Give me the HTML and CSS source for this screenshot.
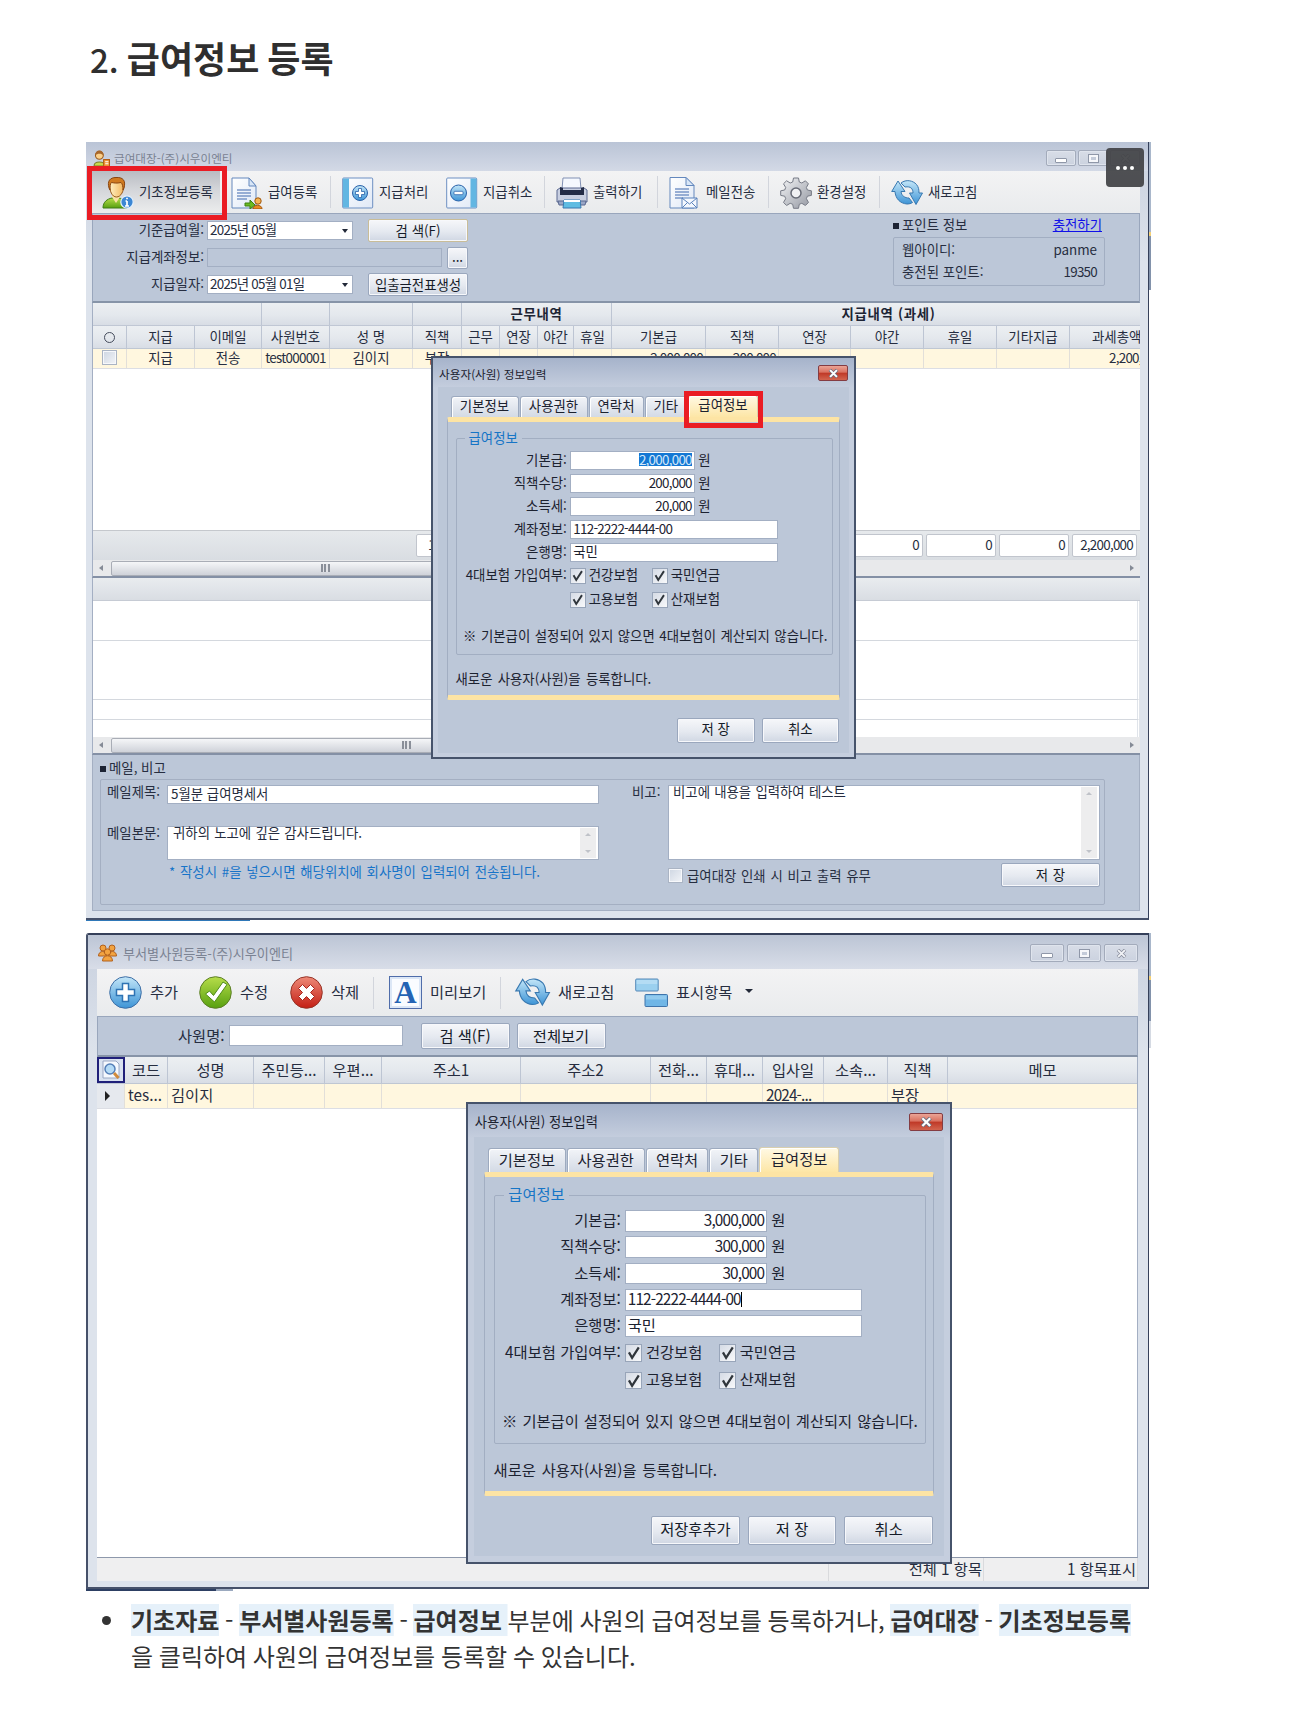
FILE: index.html
```html
<!DOCTYPE html>
<html lang="ko">
<head>
<meta charset="utf-8">
<title>급여정보 등록</title>
<link rel="stylesheet" href="styles.css">
</head>
<body>
<svg class="defs" width="0" height="0" aria-hidden="true">
  <defs>
    <linearGradient id="gBlue" x1="0" y1="0" x2="0" y2="1"><stop offset="0" stop-color="#c3e6f8"/><stop offset="1" stop-color="#3d94d6"/></linearGradient>
    <linearGradient id="gGreen" x1="0" y1="0" x2="0" y2="1"><stop offset="0" stop-color="#b7dd4a"/><stop offset="1" stop-color="#57a010"/></linearGradient>
    <linearGradient id="gRed" x1="0" y1="0" x2="0" y2="1"><stop offset="0" stop-color="#ee8a78"/><stop offset="1" stop-color="#c31e14"/></linearGradient>
    <linearGradient id="gGrey" x1="0" y1="0" x2="1" y2="1"><stop offset="0" stop-color="#f3f4f6"/><stop offset="1" stop-color="#9296a0"/></linearGradient>
    <linearGradient id="gFace" x1="0" y1="0" x2="1" y2="0"><stop offset="0" stop-color="#fff0c4"/><stop offset="1" stop-color="#f3b65c"/></linearGradient>
    <linearGradient id="gPaper" x1="0" y1="0" x2="1" y2="1"><stop offset="0" stop-color="#ffffff"/><stop offset="1" stop-color="#dfe8f6"/></linearGradient>
    <symbol id="person" viewBox="0 0 32 32">
      <path d="M1 31c0-6 4-9 9-10h7c5 1 7 4 8 10z" fill="url(#gGreen)" stroke="#3f7d14"/>
      <path d="M10 20l4 6 4-6v-3h-8z" fill="#fbe2a4"/>
      <path d="M7.500 7c0-4 3-6 7-6s7.500 2 7.500 6c0 7-3 13-7.500 13S7.500 14 7.500 7z" fill="url(#gFace)" stroke="#96561a"/>
      <path d="M7 11C5 4 8 .500 14 .500c7-.500 10 3 8 10.500l-1 2c0-4-.500-6-2-7.500-4 1-7 .500-9.500 0C8 7 8 9 8 13z" fill="#d07a20" stroke="#8a4510"/>
      <circle cx="25" cy="25" r="6.200" fill="#3c87d4" stroke="#e5f1fc" stroke-width="1.200"/>
      <path d="M25 24v5M23.500 24h1.500M23 29h4M25 20.800v1.500" stroke="#fff" stroke-width="1.700"/>
    </symbol>
    <symbol id="paysheet" viewBox="0 0 32 32">
      <path d="M1 1h17l7 8v22H1z" fill="url(#gPaper)" stroke="#6488bd"/><path d="M18 1v8h7z" fill="#d8e6f7" stroke="#6488bd"/>
      <path d="M6 13h14M6 16h14M6 19h14M6 22h10" stroke="#7a97c7" stroke-width="1.300"/>
      <path d="M14 26h5v-3l5 5-5 4v-3h-5z" fill="#6bbb20" stroke="#3c8010"/>
      <circle cx="27" cy="24" r="3.200" fill="#f5b552" stroke="#a0560f"/><path d="M22 32c0-5 9-5 9 0z" fill="#e88a22" stroke="#a0560f"/>
    </symbol>
    <symbol id="pay" viewBox="0 0 32 32">
      <rect x=".700" y="1" width="30" height="30" rx="1" fill="url(#gPaper)" stroke="#6d8fc2"/><rect x="1" y="1.500" width="6" height="29" fill="#62b6e2"/>
      <circle cx="18" cy="16" r="7.500" fill="url(#gBlue)" stroke="#2a62aa"/>
      <path d="M16.500 11.500h3v3h3v3h-3v3h-3v-3h-3v-3h3z" fill="#fff" stroke="#2a62aa" stroke-width=".8"/>
    </symbol>
    <symbol id="unpay" viewBox="0 0 32 32">
      <rect x=".700" y="1" width="30" height="30" rx="1" fill="url(#gPaper)" stroke="#6d8fc2"/><rect x="24.500" y="1.500" width="6" height="29" fill="#62b6e2"/>
      <circle cx="12.500" cy="16" r="8" fill="url(#gBlue)" stroke="#2a62aa"/>
      <rect x="8" y="14.300" width="9" height="3.400" rx=".8" fill="#fff" stroke="#2a62aa" stroke-width=".8"/>
    </symbol>
    <symbol id="printer" viewBox="0 0 32 32">
      <path d="M7 1h17l1 11H6z" fill="#f5f8fe" stroke="#8190b3"/>
      <path d="M1 13l3-2h24l3 2v12H1z" fill="#c8cfe1" stroke="#5a6890"/>
      <path d="M4 10l3 1v2h18v-2l3-1v8H4z" fill="#232c47"/>
      <path d="M2 24h28l-1 4H3z" fill="#99a6c6" stroke="#5a6890"/>
      <path d="M8 23h16l1 8H7z" fill="#5fbce2" stroke="#3878b0"/><path d="M8 23h16v2H8z" fill="#fff"/>
    </symbol>
    <symbol id="mail" viewBox="0 0 32 32">
      <path d="M1 0.500h16l8 8V31H1z" fill="url(#gPaper)" stroke="#6488bd"/><path d="M17 .500v8h8z" fill="#d8e6f7" stroke="#6488bd"/>
      <path d="M6 12h14M6 15h14M6 18h14M6 21h8" stroke="#7a97c7" stroke-width="1.300"/>
      <path d="M13 21h15v10H13z" fill="#f4f8fe" stroke="#5a82bc"/><path d="M13 21l7.500 6 7.500-6M13 31l5.500-5.500M28 31l-5.500-5.500" fill="none" stroke="#5a82bc"/>
    </symbol>
    <symbol id="gear" viewBox="0 0 32 32">
      <path d="M13.500 1h5l.8 4 2.500 1 3.600-2.200 3 3-2 3.700 1 2.500 4 .8v4.600l-4 .8-1 2.500 2.100 3.700-3.100 3.100-3.600-2.200-2.500 1-.8 4h-5l-.8-4-2.500-1-3.600 2.200-3.100-3.100 2.200-3.700-1-2.500-4-.8v-4.600l4-.8 1-2.500-2.200-3.700 3.100-3 3.600 2.200 2.500-1z" fill="url(#gGrey)" stroke="#777b86"/>
      <circle cx="16" cy="16" r="5" fill="#f0f1f3" stroke="#666a75" stroke-width="1.500"/>
    </symbol>
    <symbol id="refresh" viewBox="0 0 32 32">
      <path d="M7 4L.7 14.500H4c.5 7 5 12 12 12.500 2 0 4-.5 5.500-1.500L18 21c-4 0-7.500-2-8-6.500h4z" fill="url(#gBlue)" stroke="#3878b0"/>
      <path d="M10 6c5-4 12-2.500 15.500 1.500 2 2.500 2.500 5 2.500 8.500h3.500L25 27.500 18.500 16H22c0-4-2-7-8-6z" fill="url(#gBlue)" stroke="#3878b0"/>
    </symbol>
    <symbol id="add" viewBox="0 0 33 33">
      <circle cx="16.500" cy="16.500" r="15.800" fill="url(#gBlue)" stroke="#3f6fa6"/>
      <path d="M13.500 7.500h6v6h6v6h-6v6h-6v-6h-6v-6h6z" fill="#fff" stroke="#2e73b4" stroke-width="1.500"/>
    </symbol>
    <symbol id="ok" viewBox="0 0 33 33">
      <circle cx="16.500" cy="16.500" r="15.800" fill="url(#gGreen)" stroke="#5d7f28"/>
      <path d="M6.500 18l4-3 4 4.500L24 6l4 2.500L15.500 26z" fill="#fff" stroke="#4d8d16"/>
    </symbol>
    <symbol id="del" viewBox="0 0 33 33">
      <circle cx="16.500" cy="16.500" r="15.800" fill="url(#gRed)" stroke="#963428"/>
      <path d="M12.500 8.500l4 4 4-4 4 4-4 4 4 4-4 4-4-4-4 4-4-4 4-4-4-4z" fill="#fff" stroke="#a8231a"/>
    </symbol>
    <symbol id="tiles" viewBox="0 0 33 33">
      <rect x=".7" y="3" width="22.500" height="12" rx="1" fill="#9bd0ef" stroke="#5588b8"/><rect x="1.700" y="4" width="20.500" height="4" fill="#b4dcf4"/>
      <rect x="10" y="18.500" width="22.500" height="12" rx="1" fill="#70b6e6" stroke="#3f74ab"/><rect x="11" y="19.500" width="20.500" height="4" fill="#92caee"/>
    </symbol>
    <symbol id="smallPerson" viewBox="0 0 16 16">
      <path d="M1 15c0-5 10-5 10 0z" fill="#c8d94e" stroke="#7c7c28"/><circle cx="6" cy="5" r="3.700" fill="#fbd08a" stroke="#9a5a1c"/><path d="M2 5c0-6 8-6 8 0-2-2-6-2-8 0z" fill="#a8672b"/>
      <rect x="10" y="9" width="5.500" height="6.500" fill="#f0973a" stroke="#b35b12"/><path d="M11.500 11h3M11.500 13h3" stroke="#fff"/>
    </symbol>
    <symbol id="people" viewBox="0 0 19 18">
      <g fill="#f2a340" stroke="#b2601c"><circle cx="5" cy="4" r="3"/><circle cx="14" cy="4" r="3"/><path d="M.500 12c0-6 8-6 8 0zM10.500 12c0-6 8-6 8 0z"/><circle cx="9.500" cy="8" r="3.200"/><path d="M4.500 17c0-7 10-7 10 0z"/></g>
    </symbol>
    <symbol id="find" viewBox="0 0 20 20">
      <path d="M2 1h13l3 3v14H2z" fill="#f6f9fe" stroke="#9aa8c4"/><circle cx="9" cy="9" r="5" fill="#b5dbf6" stroke="#557fb8" stroke-width="1.500"/><path d="M13 13l4.500 5" stroke="#d18b3c" stroke-width="3"/>
    </symbol>
    <symbol id="check" viewBox="0 0 16 16"><path d="M3 7.500l3.200 5.500L13 2.500" fill="none" stroke="#30363c" stroke-width="2.300"/></symbol>
    <symbol id="cross" viewBox="0 0 12 10"><path d="M2 1l8 8M10 1L2 9" fill="none" stroke="#6b7080" stroke-width="3.800"/><path d="M2.200 1.200l7.600 7.600M9.800 1.200L2.200 8.800" fill="none" stroke="#fff" stroke-width="2.200"/></symbol>
  </defs>
</svg>

<main class="page">
<h1 class="title"><span class="title-no">2.</span> 급여정보 등록</h1>

<figure class="shot shot-a">
<section class="win">
  <header class="bar">
    <svg class="bar-icon"><use href="#smallPerson"/></svg><span class="bar-text">급여대장-(주)시우이엔티</span>
    <span class="ctl"><i class="min"></i></span><span class="ctl"><i class="max"></i></span><span class="ctl"><svg><use href="#cross"/></svg></span>
  </header>
  <nav class="tools">
    <span class="tool pressed"><svg><use href="#person"/></svg>기초정보등록</span>
    <span class="tool"><svg><use href="#paysheet"/></svg>급여등록</span>
    <span class="tool sep"><svg><use href="#pay"/></svg>지급처리</span>
    <span class="tool inset"><svg><use href="#unpay"/></svg>지급취소</span>
    <span class="tool sep"><svg><use href="#printer"/></svg>출력하기</span>
    <span class="tool sep"><svg><use href="#mail"/></svg>메일전송</span>
    <span class="tool sep"><svg><use href="#gear"/></svg>환경설정</span>
    <span class="tool sep"><svg><use href="#refresh"/></svg>새로고침</span>
  </nav>
  <div class="filter">
    <div class="filter-form">
      <label>기준급여월:</label><span class="field combo num">2025년 05월</span><span class="btn hot">검 색(F)</span>
      <label>지급계좌정보:</label><span class="pair"><span class="field off"></span><span class="btn dots">...</span></span>
      <label>지급일자:</label><span class="field combo num">2025년 05월 01일</span><span class="btn">입출금전표생성</span>
    </div>
    <div class="points">
      <div class="points-head"><span><b class="sq"></b>포인트 정보</span><a class="link">충전하기</a></div>
      <div class="points-box"><span>웹아이디:</span><span>panme</span><span>충전된 포인트:</span><span class="num">19350</span></div>
    </div>
  </div>
  <div class="grid">
    <div class="row groups"><span class="g3"></span><span></span><span></span><span></span><span class="g4">근무내역</span><span class="g7">지급내역 (과세)</span></div>
    <div class="row head"><span><i class="ring"></i></span><span>지급</span><span>이메일</span><span>사원번호</span><span>성 명</span><span>직책</span><span>근무</span><span>연장</span><span>야간</span><span>휴일</span><span>기본급</span><span>직책</span><span>연장</span><span>야간</span><span>휴일</span><span>기타지급</span><span class="cut">과세총액</span></div>
    <div class="row data"><span><i class="tick"></i></span><span>지급</span><span>전송</span><span class="num">test000001</span><span>김이지</span><span>부장</span><span></span><span></span><span></span><span></span><span class="num right">2,000,000</span><span class="num right">200,000</span><span></span><span></span><span></span><span></span><span class="num cut-num">2,200,000</span></div>
    <div class="blank"></div>
    <div class="sums num"><span class="sum left">1</span><span class="sum"></span><span class="sum">0</span><span class="sum">0</span><span class="sum">0</span><span class="sum">2,200,000</span></div>
    <div class="scroll"><i class="prev"></i><span class="thumb"></span><i class="next"></i></div>
  </div>
  <div class="grid lower">
    <div class="lower-head"></div>
    <div class="line l1"></div><div class="line l2"></div><div class="line l3"></div><div class="line l4"></div>
    <div class="scroll"><i class="prev"></i><span class="thumb long"></span><i class="next"></i></div>
  </div>
  <div class="memo">
    <div class="memo-head"><b class="sq"></b>메일, 비고</div>
    <div class="memo-box">
      <div class="mail-form">
        <label>메일제목:</label><span class="field">5월분 급여명세서</span>
        <label>메일본문:</label><span class="field area">귀하의 노고에 깊은 감사드립니다.<i class="vscroll"></i></span>
        <span class="hint">* 작성시 #을 넣으시면 해당위치에 회사명이 입력되어 전송됩니다.</span>
      </div>
      <div class="note-form">
        <label>비고:</label><span class="field area">비고에 내용을 입력하여 테스트<i class="vscroll"></i></span>
        <div class="note-foot"><i class="tick"></i><span>급여대장 인쇄 시 비고 출력 유무</span><span class="btn">저 장</span></div>
      </div>
    </div>
  </div>
</section>

<section class="dialog first">
  <header class="dlg-bar"><span>사용자(사원) 정보입력</span><span class="close"><svg><use href="#cross"/></svg></span></header>
  <div class="dlg-body">
    <div class="tabs"><span class="t1">기본정보</span><span class="t2">사용권한</span><span class="t3">연락처</span><span class="t4">기타</span><span class="t5 on">급여정보</span></div>
    <div class="pane">
      <div class="group">
        <span class="legend">급여정보</span>
        <div class="form">
          <label>기본급:</label><span class="in num"><mark>2,000,000</mark></span><span>원</span>
          <label>직책수당:</label><span class="in num">200,000</span><span>원</span>
          <label>소득세:</label><span class="in num">20,000</span><span>원</span>
          <label>계좌정보:</label><span class="in wide num">112-2222-4444-00</span>
          <label>은행명:</label><span class="in wide">국민</span>
        </div>
        <div class="checks">
          <label>4대보험 가입여부:</label><i class="cb"><svg><use href="#check"/></svg></i><span>건강보험</span><i class="cb"><svg><use href="#check"/></svg></i><span>국민연금</span>
          <label></label><i class="cb"><svg><use href="#check"/></svg></i><span>고용보험</span><i class="cb"><svg><use href="#check"/></svg></i><span>산재보험</span>
        </div>
        <p class="warn">※ 기본급이 설정되어 있지 않으면 4대보험이 계산되지 않습니다.</p>
      </div>
      <p class="msg">새로운 사용자(사원)을 등록합니다.</p>
    </div>
    <div class="actions"><span class="btn">저 장</span><span class="btn">취소</span></div>
  </div>
</section>
<div class="mark-tool"></div>
<div class="mark-tab"></div>
<div class="more"><i></i><i></i><i></i></div>
</figure>

<figure class="shot shot-b">
<section class="win">
  <header class="bar">
    <svg class="bar-icon"><use href="#people"/></svg><span class="bar-text">부서별사원등록-(주)시우이엔티</span>
    <span class="ctl"><i class="min"></i></span><span class="ctl"><i class="max"></i></span><span class="ctl"><svg><use href="#cross"/></svg></span>
  </header>
  <nav class="tools">
    <span class="tool"><svg><use href="#add"/></svg>추가</span>
    <span class="tool"><svg><use href="#ok"/></svg>수정</span>
    <span class="tool"><svg><use href="#del"/></svg>삭제</span>
    <span class="tool sep"><b class="letter">A</b>미리보기</span>
    <span class="tool sep"><svg class="big"><use href="#refresh"/></svg>새로고침</span>
    <span class="tool"><svg><use href="#tiles"/></svg>표시항목<i class="drop"></i></span>
  </nav>
  <div class="filter"><label>사원명:</label><span class="field"></span><span class="btn">검 색(F)</span><span class="btn">전체보기</span></div>
  <div class="grid">
    <div class="row head"><span class="finder"><svg><use href="#find"/></svg></span><span>코드</span><span>성명</span><span>주민등...</span><span>우편...</span><span>주소1</span><span>주소2</span><span>전화...</span><span>휴대...</span><span>입사일</span><span>소속...</span><span>직책</span><span>메모</span></div>
    <div class="row data"><span class="cur"><i class="next"></i></span><span>tes...</span><span>김이지</span><span></span><span></span><span></span><span></span><span></span><span></span><span class="num">2024-...</span><span></span><span>부장</span><span></span></div>
  </div>
  <footer class="status"><span></span><span>전체 1 항목</span><span>1 항목표시</span></footer>
</section>

<section class="dialog second">
  <header class="dlg-bar"><span>사용자(사원) 정보입력</span><span class="close"><svg><use href="#cross"/></svg></span></header>
  <div class="dlg-body">
    <div class="tabs"><span class="t1">기본정보</span><span class="t2">사용권한</span><span class="t3">연락처</span><span class="t4">기타</span><span class="t5 on">급여정보</span></div>
    <div class="pane">
      <div class="group">
        <span class="legend">급여정보</span>
        <div class="form">
          <label>기본급:</label><span class="in num">3,000,000</span><span>원</span>
          <label>직책수당:</label><span class="in num">300,000</span><span>원</span>
          <label>소득세:</label><span class="in num">30,000</span><span>원</span>
          <label>계좌정보:</label><span class="in wide num">112-2222-4444-00<i class="caret"></i></span>
          <label>은행명:</label><span class="in wide">국민</span>
        </div>
        <div class="checks">
          <label>4대보험 가입여부:</label><i class="cb"><svg><use href="#check"/></svg></i><span>건강보험</span><i class="cb"><svg><use href="#check"/></svg></i><span>국민연금</span>
          <label></label><i class="cb"><svg><use href="#check"/></svg></i><span>고용보험</span><i class="cb"><svg><use href="#check"/></svg></i><span>산재보험</span>
        </div>
        <p class="warn">※ 기본급이 설정되어 있지 않으면 4대보험이 계산되지 않습니다.</p>
      </div>
      <p class="msg">새로운 사용자(사원)을 등록합니다.</p>
    </div>
    <div class="actions"><span class="btn">저장후추가</span><span class="btn">저 장</span><span class="btn">취소</span></div>
  </div>
</section>
</figure>

<ul class="guide">
  <li><strong>기초자료</strong> - <strong>부서별사원등록</strong> - <strong>급여정보&nbsp;</strong>부분에 사원의 급여정보를 등록하거나, <strong>급여대장</strong> - <strong>기초정보등록</strong><br>을 클릭하여 사원의 급여정보를 등록할 수 있습니다.</li>
</ul>
</main>
</body>
</html>
```

FILE: styles.css
```css
* { box-sizing: border-box; }
body { margin: 0; background: #fff; color: #333; font-family: "Noto Sans CJK KR", "Noto Sans", sans-serif; }
i { font-style: normal; display: block; }
.defs { display: block; }
.page { height: 1724px; padding: 31px 0 0 86px; overflow: hidden; }
.title { margin: 0; height: 111px; padding-left: 4px; font-size: 36px; line-height: 53px; font-weight: 700; color: #2f2f2f; word-spacing: -2px; }
.title-no { font-weight: 500; font-size: 33px; }

/* application windows */
.shot { position: relative; margin: 0; width: 1065px; white-space: nowrap; color: #262d40; }
.shot-a { height: 779px; margin-bottom: 12px; font-size: 13.4px; background: linear-gradient(90deg, #2f78b8 164px, #fff 164px) bottom left / 100% 2px no-repeat; }
.shot-b { height: 658px; font-size: 15.3px; background: linear-gradient(90deg, #2d3f63 130px, #9ba9bf 130px, #9ba9bf 147px, #fff 147px) bottom left / 100% 3px no-repeat; }
.shot::after { content: ""; position: absolute; right: 0; top: 0; width: 2px; height: 148px; background: linear-gradient(#a9b7cb 90px, #f5d176 90px, #f5d176 94px, #8292ab 94px); }
.shot-b::after { height: 115px; background: linear-gradient(#a9b7cb 43px, #f5d176 43px, #f5d176 47px, #8292ab 47px, #8292ab 88px, #d5dae3 88px); }
.win { width: 1063px; background: linear-gradient(#c8d0de, #dde3ec 120px); border-right: 1px solid #35405a; border-bottom: 2px solid #46516a; border-radius: 3px 0 0 0; }
.shot-a .win { height: 778px; padding: 0 8px 0 6px; }
.shot-b .win { height: 656px; padding: 0 10px 0 9px; border-top: 2px solid #35405a; border-left: 2px solid #46516a; }
.bar { display: flex; align-items: center; color: #7a8292; }
.shot-a .bar { height: 29px; margin: 0 -8px 0 -6px; padding: 3px 8px 0 7px; font-size: 11.6px; background: linear-gradient(#bac4d6, #d3d9e6); }
.shot-b .bar { height: 34px; margin: 0 -10px 0 -9px; padding: 4px 10px 2px 10px; font-size: 13.1px; background: linear-gradient(#bcc5d5, #d8dde8); }
.bar-icon { width: 17px; height: 17px; }
.shot-b .bar-icon { width: 19px; height: 18px; }
.bar-text { flex: 1; padding-left: 4px; }
.shot-b .bar-text { padding-left: 6px; }
.ctl { width: 30px; height: 16px; margin-left: 2px; border: 1px solid #a3abbb; border-radius: 2px; display: flex; align-items: center; justify-content: center; background: linear-gradient(#d8dde7, #cbd2df); box-shadow: inset 0 0 0 1px #dfe4ed; }
.shot-b .ctl { width: 34px; height: 18px; margin-left: 3px; }
.ctl svg { width: 11px; height: 9px; opacity: .7; }
.min { width: 12px; height: 5px; margin-top: 5px; border: 1px solid #8f97a8; background: #fff; border-radius: 1px; }
.max { width: 11px; height: 9px; border: 1px solid #8f97a8; background: #c4cbd9; box-shadow: inset 0 0 0 2px #f6f7fa; }

.tools { display: grid; background: linear-gradient(#f3f3f4, #e9ebed); }
.shot-a .tools { height: 42px; grid-template-columns: 139px 99px 104px 110px 113px 111px 111px 100px; }
.shot-b .tools { height: 47px; padding-left: 12px; grid-template-columns: 90px 91px 83px 127px 134px 130px; }
.tool { display: flex; align-items: center; gap: 5px; padding-bottom: 3px; }
.tool svg { width: 32px; height: 32px; flex: none; position: relative; top: 2px; }
.shot-a .tool.pressed { padding-left: 10px; margin-right: 11px; background: linear-gradient(#b9bcc2, #d4d6da 45%, #eceded); }
.tool.sep { background: linear-gradient(#d2d5dc, #d2d5dc) left center / 1px 32px no-repeat; }
.shot-a .tool.sep, .shot-a .tool.inset { padding-left: 12px; }
.shot-b .tool { gap: 8px; }
.shot-b .tool.sep { padding-left: 16px; }
.shot-b .tool.sep + .sep { padding-left: 13px; gap: 6px; }
.shot-b .tool.sep + .tool:last-child { padding-left: 1px; }
.shot-b .tool svg, .letter { width: 33px; height: 33px; position: relative; top: 1px; }
.shot-b .tool .big { width: 39px; height: 35px; }
.letter { border: 1px solid #4f6daa; box-shadow: inset 0 0 0 2px #dce7f6; background: #fafcff; color: #2464b4; font: 700 31px/32px "Liberation Serif", serif; text-align: center; }
.drop, .combo::after { content: ""; border: 4px solid transparent; border-top: 4px solid #222938; border-bottom: 0; margin-left: 5px; }

.field { display: block; background: #fff; border: 1px solid #a3afc3; padding: 0 3px; }
.btn { display: flex; align-items: center; justify-content: center; padding-bottom: 2px; border: 1px solid #9aa7bd; border-radius: 2px; background: linear-gradient(#f6f7fa, #e5e9f0 55%, #d0d7e3); box-shadow: inset 0 0 0 1px #f7f8fb; color: #151b28; }
.btn.hot { border-color: #c9bd98; }
.num { letter-spacing: -.055em; }
.filter { background: #bcc7d8; border: 1px solid #99a6bc; border-bottom: 2px solid #8794a8; }
.shot-a .filter { height: 90px; display: flex; justify-content: space-between; padding: 5px 34px 0 0; }
.filter-form { display: grid; grid-template-columns: 111px 146px 114px; grid-auto-rows: 23px; row-gap: 4px; column-gap: 3px; align-items: center; }
.filter-form label { text-align: right; margin-top: -3px; }
.filter-form > .btn { margin-left: 12px; width: 100px; height: 23px; }
.filter-form .field { height: 19px; line-height: 15px; padding-left: 2px; }
.combo { display: flex; align-items: center; justify-content: space-between; padding-bottom: 2px; }
.combo::after { border-width: 4px 3.500px 0; margin: 2px 1px 0 0; }
.pair { grid-column: span 2; display: flex; gap: 5px; align-items: center; }
.pair .off { width: 235px; background: none; }
.dots { width: 21px; height: 22px; padding-bottom: 3px; }
.points { width: 212px; line-height: 20px; margin-top: -5px; }
.points-head { display: flex; justify-content: space-between; padding-right: 3px; margin-bottom: 2px; line-height: 21px; }
.sq { display: inline-block; width: 6px; height: 6px; background: #1c2334; margin: 0 3px 1px 0; }
.link { color: #1010e8; text-decoration: underline; }
.points-box { height: 49px; display: grid; grid-template-columns: auto auto; justify-content: space-between; align-content: center; row-gap: 2px; padding: 0 7px 3px 8px; border: 1px solid #a2aec2; border-radius: 2px; }
.points-box span:nth-child(even) { text-align: right; }

.grid { background: #fff; border-left: 1px solid #a4afc3; overflow: hidden; }
.shot-a .grid { height: 275px; border-bottom: 2px solid #8490a5; }
.row { display: grid; text-align: center; }
.shot-a .row { grid-template-columns: 34px 68px 67px 68px 83px 49px 38px 38px 36px 38px 94px 73px 72px 73px 73px 73px 71px; }
.row > span { min-width: 0; border-right: 1px solid #bdc5d3; display: flex; align-items: center; justify-content: center; padding-bottom: 2px; }
.row > span:last-child { border-right: 0; }
.groups, .head { background: linear-gradient(#eceff2, #e4e8ed 55%, #d8dde5); }
.groups { height: 23px; font-weight: 700; border-bottom: 1px solid #c0c7d4; color: #1d2434; letter-spacing: .7px; }
.shot-a .head { height: 23px; border-bottom: 1px solid #bfc7d3; }
.g3 { grid-column: span 3; } .g4 { grid-column: span 4; } .g7 { grid-column: span 7; }
.shot-a .row .g7 { padding-left: 24px; }
.shot-a .row .cut { justify-content: flex-start; padding-left: 22px; }
.shot-a .row .cut-num { justify-content: flex-start; padding-left: 39px; }
.data > span { background: #fff7df; border-right-color: #e2dfd9; border-bottom: 1px solid #dcdee4; }
.shot-a .data { height: 20px; }
.shot-a .data > span { padding-bottom: 3px; line-height: 16px; }
.shot-a .row .right { justify-content: flex-end; padding-right: 2px; }
.ring { width: 11px; height: 11px; border: 1px solid #454c5c; border-radius: 50%; margin-top: 2px; }
.tick { width: 15px; height: 15px; flex: none; border: 1px solid #aab4c4; box-shadow: inset 0 0 0 1px #f7f8fb; background: linear-gradient(135deg, #ced6e2, #f2f4f8); }
.blank { height: 161px; }
.sums { height: 30px; display: grid; grid-template-columns: 301px 130px 70px 70px 70px 65px; gap: 3px; justify-content: end; padding: 3px 3px 4px 0; border-top: 1px solid #c5c8cd; background: linear-gradient(#e6e9ec, #d9dde2); }
.sum { height: 23px; line-height: 18px; border: 1px solid #c1c5cd; border-radius: 2px; background: #fff; text-align: right; padding-right: 3px; }
.sum.left { text-align: left; padding-left: 11px; }
.scroll { height: 16px; display: flex; align-items: center; background: #e8e9eb; padding: 0 6px; }
.thumb { width: 429px; height: 15px; margin-left: 8px; border: 1px solid #a9adb6; border-radius: 2px; background: repeating-linear-gradient(90deg, #8a8f99 0 2px, #e3e4e8 2px 3.300px) center / 9px 8px no-repeat, linear-gradient(#f5f6f8, #cfd2d9); }
.thumb.long { width: 591px; }
.prev, .next { width: 0; height: 0; border: 3.500px solid transparent; }
.prev { border-right: 4px solid #858b96; border-left: 0; }
.next { border-left: 4px solid #858b96; border-right: 0; margin-left: auto; }
.shot-a .lower { height: 177px; }
.lower-head { height: 23px; background: linear-gradient(#e9ecef, #d9dde3); border-bottom: 1px solid #c6cbd4; }
.line { border-bottom: 1px solid #d4d8de; border-right: 3px double #e0e4ea; }
.l1 { height: 40px; } .l2 { height: 59px; } .l3 { height: 20px; } .l4 { height: 17px; border-bottom: 0; }

.memo { height: 156px; background: #bcc7d8; border: 1px solid #a4afc2; border-top: 0; padding: 3px 34px 0 7px; }
.memo-head { height: 21px; line-height: 19px; }
.memo-box { height: 126px; display: flex; justify-content: space-between; border: 1px solid #a4afc2; border-radius: 2px; padding: 5px 4px 0 6px; }
.mail-form { display: grid; grid-template-columns: 57px 432px; grid-template-rows: 19px 56px 26px; column-gap: 3px; align-content: start; }
.mail-form label, .note-form label { line-height: 13px; }
.mail-form > :nth-child(n + 3) { margin-top: 22px; }
.mail-form .field { line-height: 14px; }
.area { position: relative; padding-left: 5px; word-spacing: .500px; }
.mail-form .area { line-height: 11px; }
.note-form .area { line-height: 11px; padding-left: 4px; }
.vscroll { position: absolute; right: 2px; top: 1px; bottom: 1px; width: 16px; background: #ededee; }
.vscroll::before, .vscroll::after { content: ""; position: absolute; left: 5px; border: 3px solid transparent; }
.vscroll::before { top: 5px; border-bottom-color: #bfc2c8; border-top: 0; }
.vscroll::after { bottom: 5px; border-top-color: #bfc2c8; border-bottom: 0; }
.mail-form .hint { grid-column: 2; margin-top: 1px; padding-left: 2px; line-height: 20px; color: #1774c8; word-spacing: 1px; }
.note-form { display: grid; grid-template-columns: 32px 432px; grid-template-rows: 75px 30px; column-gap: 4px; align-content: start; }
.note-foot { grid-column: 2; display: flex; align-items: center; gap: 4px; height: 30px; word-spacing: 1px; }
.note-foot > span { margin-top: -1px; }
.note-foot .btn { width: 99px; height: 24px; margin-left: auto; }

/* user dialog, sized in --u units */
.dialog { position: absolute; z-index: 2; width: calc(425 * var(--u)); height: calc(403.500 * var(--u)); border: 2px solid #46536b; background: linear-gradient(#a6b3cb, #c5cede calc(30 * var(--u)), #c5cede); font-size: calc(13.400 * var(--u)); color: #1c2230; }
.first { --u: 1px; left: 345px; top: 213.500px; }
.second { --u: 1.144px; left: 380px; top: 169px; }
.dlg-bar { height: calc(29 * var(--u)); display: flex; align-items: center; justify-content: space-between; padding: calc(2 * var(--u)) calc(6 * var(--u)) 0; font-size: .87em; }
.close { width: calc(30 * var(--u)); height: calc(16 * var(--u)); display: flex; align-items: center; justify-content: center; border: 1px solid #843c42; border-radius: 2px; background: linear-gradient(#eba496, #d9705f 45%, #bf3826 50%, #d2644e); }
.close svg { width: calc(11 * var(--u)); height: calc(9 * var(--u)); }
.dlg-body { height: calc(366 * var(--u)); margin: 0 calc(5 * var(--u)); padding: calc(9 * var(--u)) calc(10 * var(--u)) 0; background: #bcc7d8; }
.tabs { height: calc(21.500 * var(--u)); display: flex; align-items: flex-end; gap: 1px; padding-left: calc(2.500 * var(--u)); }
.tabs span { height: calc(21 * var(--u)); line-height: calc(17.500 * var(--u)); text-align: center; border: 1px solid #9daabf; border-bottom: 0; border-radius: 3px 3px 0 0; background: linear-gradient(#f2f4f8, #d3dae5); box-shadow: inset 1px 1px #fff; }
.t1, .t2 { width: calc(68 * var(--u)); } .t3 { width: calc(55 * var(--u)); } .t4 { width: calc(42.500 * var(--u)); } .t5 { width: calc(70 * var(--u)); }
.tabs .on { background: linear-gradient(#fff9e4, #fde6a6); border-color: #d9cfae; height: calc(22 * var(--u)); }
.pane { height: calc(283 * var(--u)); margin: 0 calc(-1 * var(--u)); border: 1px solid #a2aec2; border-top: calc(5 * var(--u)) solid #fde4a4; border-bottom: calc(5 * var(--u)) solid #fde4a4; border-radius: 2px; padding: calc(16 * var(--u)) calc(6 * var(--u)) 0 calc(7.500 * var(--u)); }
.group { position: relative; height: calc(217 * var(--u)); border: 1px solid #a2aec2; border-radius: 2px; padding-top: calc(12 * var(--u)); }
.legend { position: absolute; left: calc(8 * var(--u)); top: calc(-11.500 * var(--u)); padding: 0 calc(4 * var(--u)); line-height: calc(18 * var(--u)); background: #bcc7d8; color: #1675c6; }
.form { display: grid; grid-template-columns: calc(110.300 * var(--u)) calc(124.500 * var(--u)) 1fr; grid-auto-rows: calc(19 * var(--u)); gap: calc(4 * var(--u)); column-gap: calc(3.500 * var(--u)); line-height: calc(16 * var(--u)); }
.form label, .checks label { text-align: right; }
.in { background: #fff; border: 1px solid #a3afc3; text-align: right; padding: 0 2px; height: calc(19 * var(--u)); line-height: calc(15 * var(--u)); }
.in.wide { grid-column: span 2; width: calc(207.500 * var(--u)); text-align: left; }
mark { background: #1478d4; color: #d5e9fa; line-height: 1; display: inline-block; }
.caret { display: inline-block; width: 1px; height: 1em; background: #000; vertical-align: -2px; }
.checks { display: grid; grid-template-columns: calc(110.300 * var(--u)) calc(15 * var(--u)) calc(60 * var(--u)) calc(15 * var(--u)) 1fr; grid-auto-rows: calc(24 * var(--u)); column-gap: calc(3.500 * var(--u)); align-items: center; margin-top: calc(2 * var(--u)); }
.checks label, .checks span { margin-top: calc(-3.500 * var(--u)); }
.cb { width: calc(15.500 * var(--u)); height: calc(15.500 * var(--u)); border: 1px solid #98a5b9; background: linear-gradient(135deg, #d5dbe5, #f8f9fb); }
.cb svg { display: block; width: 100%; height: 100%; }
.warn { margin: calc(13 * var(--u)) 0 0 calc(6.500 * var(--u)); line-height: calc(20 * var(--u)); word-spacing: .800px; height: calc(20 * var(--u)); }
.msg { margin: calc(12.700 * var(--u)) 0 0 0; line-height: calc(20 * var(--u)); word-spacing: 1.500px; }
.actions { display: flex; justify-content: flex-end; gap: calc(7 * var(--u)); padding-top: calc(17.500 * var(--u)); }
.actions .btn { width: calc(77.500 * var(--u)); height: calc(25.500 * var(--u)); padding-bottom: 5px; }

/* red call-outs and the hover menu over the first window */
.mark-tool { position: absolute; z-index: 3; left: 1px; top: 24px; width: 140px; height: 54px; border: 5px solid #ea1c24; }
.mark-tab { position: absolute; z-index: 3; left: 598px; top: 249px; width: 79px; height: 37px; border: 5px solid #ea1c24; }
.more { position: absolute; z-index: 3; left: 1020px; top: 6px; width: 38px; height: 39px; border-radius: 4px; background: rgba(66, 67, 70, .93); display: flex; gap: 3px; align-items: center; justify-content: center; }
.more i { width: 4px; height: 4px; border-radius: 50%; background: #fff; }

/* employee list window */
.shot-b .filter { height: 41px; display: flex; align-items: center; padding: 0 0 1px 80px; }
.shot-b .filter label { margin-top: -2px; }
.shot-b .filter .field { width: 174px; height: 21px; margin: 0 18px 0 4px; }
.shot-b .filter .btn { width: 89px; height: 26px; margin-right: 7px; }
.shot-b .grid { height: 501px; border-left: 0; border-bottom: 1px solid #8d98ab; border-right: 1px solid #a4afc3; }
.shot-b .row { grid-template-columns: 28px 43px 86px 71px 57px 139px 130px 56px 56px 61px 64px 60px 1fr; }
.shot-b .row > span { padding-bottom: 3px; }
.shot-b .head { height: 27px; border-bottom: 1px solid #bfc7d3; }
.shot-b .data { height: 25px; }
.shot-b .data > span { justify-content: flex-start; padding-left: 3px; line-height: 21px; }
.shot-b .data .cur { background: #e6e9ee; padding-left: 8px; padding-bottom: 0; }
.shot-b .cur .next { margin: 0; border-width: 5px 0 5px 5px; border-left-color: #222; }
.shot-b .head .finder { border: 2px solid #20207a; background: #d9e2f0; padding-bottom: 0; }
.finder svg { width: 20px; height: 20px; }
.status { display: grid; grid-template-columns: 732px 155px 1fr; height: 23px; line-height: 21px; text-align: right; background: #efeff0; }
.status span { border-right: 1px solid #d9dadd; padding-right: 1px; }

.guide { margin: 11px 0 0; padding: 0 0 0 45px; font-size: 24px; line-height: 36px; color: #333; white-space: nowrap; list-style: none; word-spacing: -1px; }
.guide li { position: relative; }
.guide li::before { content: ""; position: absolute; left: -29px; top: 14px; width: 9px; height: 9px; border-radius: 50%; background: #333; }
.guide strong { font-weight: 700; background: linear-gradient(#e6f1fa, #e6f1fa) center / 100% 32px no-repeat; }
```
